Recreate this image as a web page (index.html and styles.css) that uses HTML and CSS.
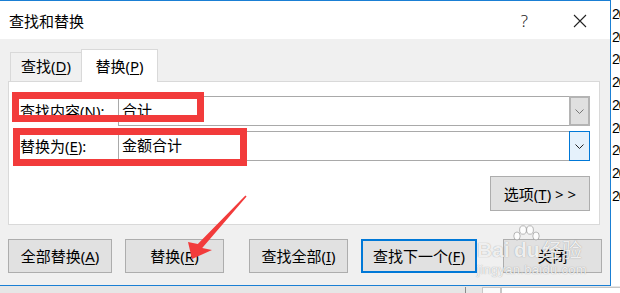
FILE: index.html
```html
<!DOCTYPE html>
<html>
<head>
    <title>查找和替换</title>
    <link rel="stylesheet" href="styles.css">
</head>
<body>
    <div class="screen">
        <div class="top">
            <div class="dialog">
                <div class="titlebar">
                    <span class="title">查找和替换</span>
                    <span class="help">?</span>
                    <svg class="close" width="14" height="14" viewBox="0 0 14 14">
                        <path d="M1 1 L13 13 M13 1 L1 13" stroke="#222" stroke-width="1.1" fill="none"/>
                    </svg>
                </div>
                <div class="body">
                    <div class="tabs">
                        <div class="tab">查找(<u>D</u>)</div>
                        <div class="tab active">替换(<u>P</u>)</div>
                    </div>
                    <div class="panel">
                        <div class="field">
                            <label class="field-label">查找内容(<u>N</u>):</label>
                            <div class="combo">
                                <span class="combo-text">合计</span>
                                <span class="combo-btn">
                                    <svg width="9" height="5" viewBox="0 0 9 5"><path d="M0.5 0.5 L4.5 4.5 L8.5 0.5" stroke="#777" fill="none"/></svg>
                                </span>
                            </div>
                        </div>
                        <div class="field">
                            <label class="field-label">替换为(<u>E</u>):</label>
                            <div class="combo">
                                <span class="combo-text">金额合计</span>
                                <span class="combo-btn focus">
                                    <svg width="9" height="5" viewBox="0 0 9 5"><path d="M0.5 0.5 L4.5 4.5 L8.5 0.5" stroke="#222" fill="none"/></svg>
                                </span>
                            </div>
                        </div>
                        <div class="options-row">
                            <button class="btn btn-options">选项(<u>T</u>) &gt; &gt;</button>
                        </div>
                    </div>
                    <div class="actions">
                        <button class="btn btn-all">全部替换(<u>A</u>)</button>
                        <button class="btn btn-replace">替换(<u>R</u>)</button>
                        <button class="btn btn-findall">查找全部(<u>I</u>)</button>
                        <button class="btn btn-next">查找下一个(<u>F</u>)</button>
                        <button class="btn btn-close">关闭</button>
                    </div>
                </div>
            </div>
            <div class="sheet">
                <div>20</div><div>20</div><div>20</div><div>20</div><div>20</div>
                <div>20</div><div>20</div><div>20</div><div>20</div>
            </div>

            <div class="mark mark-find"></div>
            <div class="mark mark-replace"></div>
            <svg class="arrow" width="75" height="75" viewBox="0 0 75 75">
                <polygon points="65.4,5.5 66.6,6.5 22.2,58 32,60 12,69 8,52 17.8,54" fill="#f23b3b"/>
            </svg>

            <div class="watermark">
                <span class="wm-bai">Bai</span>
                <svg class="wm-paw" width="28" height="20" viewBox="0 0 28 20">
                    <ellipse cx="5" cy="11" rx="3.2" ry="4" />
                    <ellipse cx="11" cy="5" rx="3.4" ry="4.2" />
                    <ellipse cx="18" cy="5" rx="3.4" ry="4.2" />
                    <ellipse cx="24" cy="11" rx="3.2" ry="4" />
                </svg>
                <span class="wm-du">du</span>
                <span class="wm-jy">经验</span>
                <span class="wm-url">jingyan.baidu.com</span>
            </div>
        </div>
        <div class="statusbar">
            <span class="sb-tick"></span>
            <span class="sb-box"></span>
            <span class="sb-field"></span>
        </div>
    </div>
</body>
</html>
```

FILE: styles.css
```css
body {
    margin: 0;
    width: 620px;
    height: 293px;
    overflow: hidden;
    background-color: #fff;
    font-family: "Noto Sans", "Noto Sans CJK SC", sans-serif;
    font-size: 15px;
    color: #000;
}

.screen {
    display: flex;
    flex-direction: column;
    height: 293px;
}

.top {
    position: relative;
    display: flex;
    height: 286px;
}

u {
    text-decoration: underline;
    text-underline-offset: 2px;
}

/* dialog */

.dialog {
    width: 611px;
    height: 286px;
    box-sizing: border-box;
    border-top: 1px solid #1a7fd4;
    border-right: 1px solid #1a7fd4;
    border-bottom: 1px solid #1a7fd4;
    display: flex;
    flex-direction: column;
}

.titlebar {
    height: 38px;
    background-color: #fff;
    display: flex;
    align-items: center;
    padding: 0 23px 0 9px;
}

.title {
    line-height: 20px;
    padding-top: 1px;
}

.help {
    margin-left: auto;
    font-family: "Noto Sans", sans-serif;
    font-size: 17px;
    font-weight: 300;
    line-height: 20px;
    color: #222;
    padding-top: 2px;
}

.close {
    margin-left: 45px;
    margin-top: 2px;
}

.body {
    height: 246px;
    background-color: #f0f0f0;
    padding-top: 10px;
    box-sizing: border-box;
}

.tabs {
    display: flex;
    align-items: flex-end;
    height: 32px;
    padding-left: 10px;
}

.tab {
    box-sizing: border-box;
    width: 71px;
    height: 29px;
    border-top: 1px solid #d9d9d9;
    border-left: 1px solid #d9d9d9;
    padding-top: 3px;
    line-height: 20px;
    text-align: center;
}

.tab.active {
    position: relative;
    z-index: 1;
    width: 77px;
    height: 33px;
    margin-bottom: -1px;
    padding-top: 6px;
    background-color: #fff;
    border-right: 1px solid #d9d9d9;
}

.panel {
    margin-left: 8px;
    width: 592px;
    height: 144px;
    box-sizing: border-box;
    border: 1px solid #d9d9d9;
    background-color: #fff;
    padding: 14px 9px 0 11px;
}

.field {
    display: flex;
    align-items: center;
    height: 30px;
}

.field + .field {
    margin-top: 5px;
}

.field-label {
    width: 98px;
    line-height: 20px;
}

.combo {
    flex: 1;
    display: flex;
    height: 30px;
    box-sizing: border-box;
    border: 1px solid #a9a9a9;
    border-right: none;
}

.combo-text {
    flex: 1;
    padding-left: 3px;
    line-height: 27px;
}

.combo-btn {
    width: 21px;
    margin: -1px 0;
    box-sizing: border-box;
    border: 2px solid #b4b4b4;
    background-color: #e0e0e0;
    display: flex;
    align-items: center;
    justify-content: center;
}

.combo-btn.focus {
    border: 1px solid #0078d7;
    background-color: #e5f1fb;
}

.options-row {
    display: flex;
    justify-content: flex-end;
    margin-top: 15px;
}

.btn {
    height: 34px;
    box-sizing: border-box;
    border: 1px solid #adadad;
    background-color: #e1e1e1;
    font-family: inherit;
    font-size: 15px;
    color: #000;
    padding: 0;
    line-height: 20px;
}

.btn-options {
    width: 100px;
    height: 35px;
}

.actions {
    display: flex;
    margin-top: 14px;
    padding-left: 8px;
}

.btn-all { width: 104px; }
.btn-replace { width: 99px; margin-left: 13px; }
.btn-findall { width: 99px; margin-left: 25px; }
.btn-next {
    width: 116px;
    margin-left: 13px;
    border: 2px solid #0078d7;
}
.btn-close { width: 99px; margin-left: 26px; }

/* spreadsheet peeking out on the right */

.sheet {
    flex: 1;
    padding-top: 3px;
    padding-left: 1px;
    overflow: hidden;
    font-family: "Liberation Sans", sans-serif;
    font-size: 14px;
    letter-spacing: -1px;
    line-height: 22.7px;
    white-space: nowrap;
}

.statusbar {
    height: 7px;
    background-color: #e6e6e6;
    display: flex;
}

.sb-tick {
    margin-left: 465px;
    width: 1px;
    margin-top: 1px;
    background-color: #8a8a8a;
}

.sb-box {
    margin-left: 16px;
    width: 19px;
    margin-top: 1px;
    box-sizing: border-box;
    border: 1px solid #c6c6c6;
    border-bottom: none;
    background-color: #fafafa;
}

.sb-field {
    flex: 1;
    margin-top: 1px;
    border-top: 1px solid #c6c6c6;
    border-left: 1px solid #c6c6c6;
    background-color: #fff;
}

/* annotations drawn over the screenshot */

.mark {
    position: absolute;
    box-sizing: border-box;
    border: 7px solid #f23b3b;
}

.mark-find {
    left: 12px;
    top: 92px;
    width: 192px;
    height: 30px;
}

.mark-replace {
    left: 13px;
    top: 128px;
    width: 234px;
    height: 38px;
}

.arrow {
    position: absolute;
    left: 180px;
    top: 190px;
}

.watermark {
    position: absolute;
    left: 0;
    top: 0;
    color: rgba(255, 255, 255, 0.85);
    text-shadow: 0 0 1px rgba(90, 90, 90, 0.6);
    font-family: "Liberation Sans", sans-serif;
}

.wm-bai,
.wm-du,
.wm-jy,
.wm-url,
.wm-paw {
    position: absolute;
    white-space: nowrap;
}

.wm-bai {
    left: 477px;
    top: 239px;
    font-size: 21px;
    font-weight: bold;
    line-height: 22px;
}

.wm-paw {
    left: 512px;
    top: 225px;
    fill: rgba(255, 255, 255, 0.85);
    stroke: rgba(120, 120, 120, 0.5);
}

.wm-du {
    left: 514px;
    top: 239px;
    font-size: 21px;
    font-weight: bold;
    line-height: 22px;
}

.wm-jy {
    left: 542px;
    top: 238px;
    font-family: "Noto Sans CJK SC", sans-serif;
    font-size: 20px;
    line-height: 24px;
}

.wm-url {
    left: 477px;
    top: 263px;
    font-size: 13px;
    line-height: 14px;
    letter-spacing: 0.3px;
}
```
